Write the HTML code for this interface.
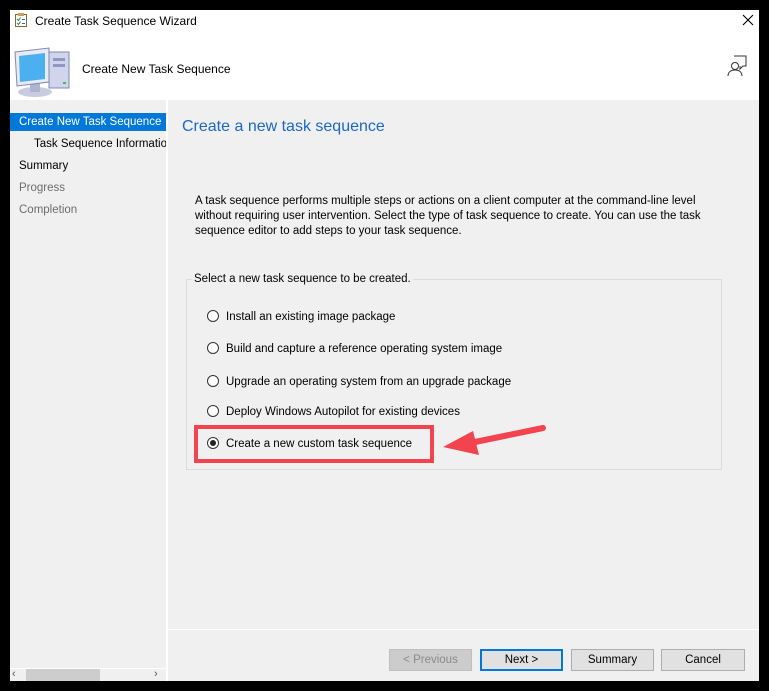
<!DOCTYPE html>
<html><head><meta charset="utf-8"><style>
*{margin:0;padding:0;box-sizing:border-box}
body{width:769px;height:691px;background:#000;position:relative;overflow:hidden;font-family:"Liberation Sans",sans-serif;font-size:11.5px;color:#000}
.abs{position:absolute;white-space:nowrap}
.t{margin-top:2px}
#win{position:absolute;left:10px;top:10px;width:749px;height:671px;background:#f0f0f0}
</style></head><body>
<div id="win">
  <div class="abs" style="left:0;top:0;width:749px;height:90px;background:#fff"></div>
  <svg class="abs" style="left:4px;top:2px" width="14" height="16"><rect x="1.5" y="2.5" width="11" height="12" fill="#fff" stroke="#8a6a3a"/><rect x="4" y="1" width="6" height="3" fill="#c8a060"/><path d="M3 7l1.5 1.5 2-3M3 11l1.5 1.5 2-3" stroke="#2a8a2a" fill="none"/><path d="M8 7.5h3M8 11.5h3" stroke="#3060c0"/></svg>
  <div class="abs" style="left:25px;top:4px;font-size:12px">Create Task Sequence Wizard</div>
  <svg class="abs" style="left:732px;top:4px" width="12" height="12"><path d="M1 1l10 10M11 1L1 11" stroke="#000" stroke-width="1.1"/></svg>
  <svg class="abs" style="left:3px;top:34px" width="60" height="56">
    <ellipse cx="22" cy="48" rx="17" ry="5" fill="#c8cce0"/>
    <rect x="36" y="8" width="20" height="36" fill="#d0d4ec" stroke="#8088b0"/>
    <rect x="40" y="14" width="12" height="3" fill="#9098c0"/>
    <rect x="40" y="20" width="12" height="3" fill="#9098c0"/>
    <rect x="50" y="38" width="3" height="2" fill="#40c040"/>
    <rect x="17" y="38" width="10" height="10" fill="#b0b4d0"/>
    <path d="M2 8l34-4v34L4 42z" fill="#e8eaf4" stroke="#8088b0"/>
    <path d="M6 12l26-3v26L7 38z" fill="#4ab0f0"/>
  </svg>
  <div class="abs" style="left:72px;top:52px;font-size:12px">Create New Task Sequence</div>
  <svg class="abs" style="left:716px;top:45px" width="22" height="22"><path d="M8 1h12v10h-3l-3 3v-3" fill="#fff" stroke="#333"/><circle cx="9" cy="11" r="3.5" fill="#fff" stroke="#333"/><path d="M2 21c0-4 3-6 7-6s7 2 7 6" fill="none" stroke="#333"/></svg>
  <div class="abs" style="left:0;top:90px;width:156px;height:581px;background:#f0f0f0"></div>
  <div class="abs" style="left:156px;top:90px;width:2px;height:581px;background:#fff"></div>
  <div class="abs" style="left:0;top:103px;width:156px;height:18px;background:#0078d7"></div>
  <div class="abs" style="left:9px;top:106px;color:#fff">Create New Task Sequence</div>
  <div class="abs" style="left:24px;top:128px;width:132px;overflow:hidden">Task Sequence Information</div>
  <div class="abs" style="left:9px;top:150px">Summary</div>
  <div class="abs" style="left:9px;top:172px;color:#6d6d6d">Progress</div>
  <div class="abs" style="left:9px;top:194px;color:#6d6d6d">Completion</div>
  <div class="abs" style="left:0;top:658px;width:156px;height:13px;background:#f0f0f0;border-top:1px solid #fff"></div>
  <div class="abs" style="left:16px;top:659px;width:74px;height:12px;background:#cdcdcd"></div>
  <div class="abs" style="left:2px;top:658px;font-size:11px;color:#555">‹</div>
  <div class="abs" style="left:144px;top:658px;font-size:11px;color:#555">›</div>
  <div class="abs" style="left:172px;top:108px;font-size:16px;color:#1b68c6">Create a new task sequence</div>
  <div class="abs" style="left:185px;top:184px;line-height:15px">A task sequence performs multiple steps or actions on a client computer at the command-line level<br>without requiring user intervention. Select the type of task sequence to create. You can use the task<br>sequence editor to add steps to your task sequence.</div>
  <div class="abs" style="left:176px;top:269px;width:536px;height:191px;border:1px solid #dcdcdc"></div>
  <div class="abs" style="left:182px;top:263px;padding:0 2px;background:#f0f0f0">Select a new task sequence to be created.</div>
  <svg class="abs" style="left:196px;top:299px" width="14" height="140">
    <g fill="#fff" stroke="#333"><circle cx="7" cy="7" r="5.5"/><circle cx="7" cy="39" r="5.5"/><circle cx="7" cy="72" r="5.5"/><circle cx="7" cy="102" r="5.5"/><circle cx="7" cy="134" r="5.5"/></g>
    <circle cx="7" cy="134" r="3" fill="#222"/>
  </svg>
  <div class="abs" style="left:216px;top:301px">Install an existing image package</div>
  <div class="abs" style="left:216px;top:333px">Build and capture a reference operating system image</div>
  <div class="abs" style="left:216px;top:366px">Upgrade an operating system from an upgrade package</div>
  <div class="abs" style="left:216px;top:396px">Deploy Windows Autopilot for existing devices</div>
  <div class="abs" style="left:216px;top:428px">Create a new custom task sequence</div>
  <div class="abs" style="left:184px;top:415px;width:240px;height:38px;border:4px solid #f2434f"></div>
  <svg class="abs" style="left:425px;top:408px" width="115" height="40"><path d="M108 10L40 24" stroke="#f2434f" stroke-width="6" stroke-linecap="round"/><path d="M8 29L38 13L44 37z" fill="#f2434f"/></svg>
  <div class="abs" style="left:158px;top:619px;width:591px;height:1px;background:#fff"></div>
  <div class="abs" style="left:379px;top:639px;width:83px;height:22px;background:#cccccc;border:1px solid #bfbfbf;color:#8a8a8a;text-align:center;line-height:20px">&lt; Previous</div>
  <div class="abs" style="left:470px;top:639px;width:83px;height:22px;background:#e1e1e1;border:2px solid #0078d7;text-align:center;line-height:18px">Next &gt;</div>
  <div class="abs" style="left:561px;top:639px;width:83px;height:22px;background:#e1e1e1;border:1px solid #adadad;text-align:center;line-height:20px">Summary</div>
  <div class="abs" style="left:651px;top:639px;width:84px;height:22px;background:#e1e1e1;border:1px solid #adadad;text-align:center;line-height:20px">Cancel</div>
</div>
</body></html>
